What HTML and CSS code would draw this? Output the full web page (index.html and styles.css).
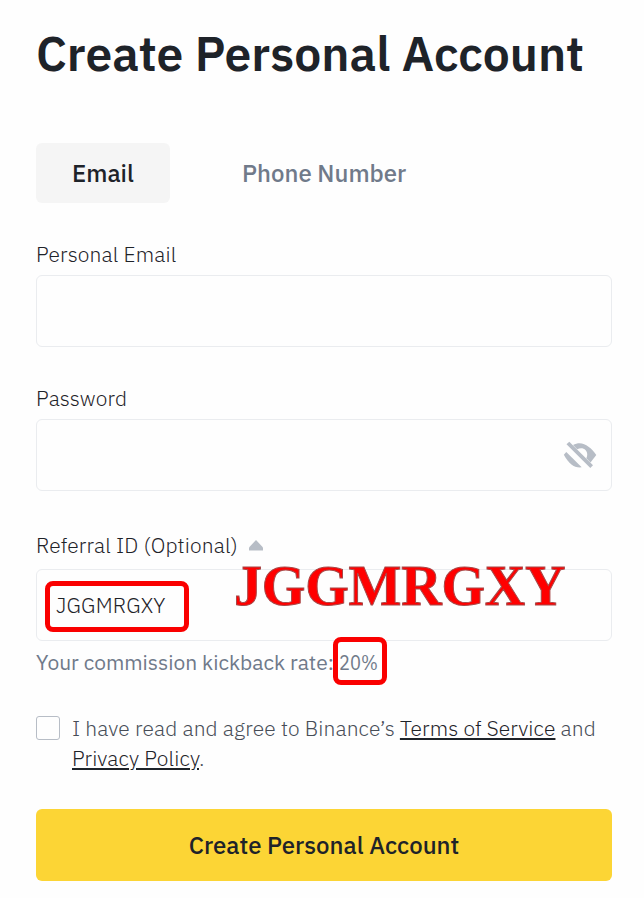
FILE: index.html
```html
<!DOCTYPE html>
<html lang="en">
<head>
    <meta charset="UTF-8">
    <meta name="viewport" content="width=device-width, initial-scale=1.0">
    <title>Create Personal Account</title>
    <link rel="stylesheet" href="styles.css">
</head>
<body>
    <div class="container">
        <h1>Create Personal Account</h1>

        <div class="tabs">
            <div class="tab active">Email</div>
            <div class="tab">Phone Number</div>
        </div>

        <div class="field">
            <div class="label label-email">Personal Email</div>
            <div class="input"></div>
        </div>

        <div class="field">
            <div class="label label-password">Password</div>
            <div class="input input-password">
                <svg class="eye" viewBox="0 0 34 28" width="34" height="28">
                    <path d="M6.3 .7L30 24.3L27.3 27L3.5 3.3z"/>
                    <path d="M10 4C19 -1 27 5 33.3 14L27.5 21.5L23.3 17.3C26.5 10.5 21 5 14.2 8.2z"/>
                    <path d="M3.3 11L18.7 26.3C11 27 6 23 .8 13.7z"/>
                </svg>
            </div>
        </div>

        <div class="field referral">
            <div class="label label-referral">
                <span>Referral ID (Optional)</span>
                <svg class="arrow" viewBox="0 0 14 11" width="14" height="11">
                    <path d="M7 0L14 7.5V10.5H0V7.5z"/>
                </svg>
            </div>
            <div class="input input-referral">
                <span class="code">JGGMRGXY</span>
                <span class="mark mark-code"></span>
                <span class="big-code">JGGMRGXY</span>
            </div>
            <div class="rate">Your commission kickback rate: <span class="percent"><span class="percent-value">20%</span><span class="mark mark-rate"></span></span></div>
        </div>

        <div class="agree">
            <span class="checkbox"></span>
            <div class="agree-text">I have read and agree to Binance’s <a class="terms">Terms of Service</a> and<br><a class="privacy">Privacy Policy</a>.</div>
        </div>

        <div class="button">Create Personal Account</div>
    </div>
</body>
</html>
```
FILE: styles.css
```css
* {
    box-sizing: border-box;
}
body {
    margin: 0;
    background-color: #fefefe;
    color: #1e2329;
    font-family: "IBM Plex Sans", Roboto, Arial, sans-serif;
    font-size: 21px;
    font-weight: 300;
}
.container {
    width: 612px;
    padding: 22px 0 0 36px;
}
h1 {
    margin: 0;
    font-size: 48px;
    font-weight: 600;
    line-height: 62px;
    white-space: nowrap;
}
.tabs {
    display: flex;
    gap: 36px;
    margin-top: 59px;
}
.tab {
    height: 60px;
    padding: 0 36px;
    border-radius: 6px;
    font-size: 24px;
    font-weight: 500;
    line-height: 61px;
    color: #707a8a;
}
.tab.active {
    width: 134px;
    background-color: #f5f5f5;
    color: #1e2329;
}
.field {
    margin-top: 42px;
}
.label {
    height: 30px;
    line-height: 18px;
    letter-spacing: 0.14px;
}
.input {
    position: relative;
    height: 72px;
    border: 1px solid #eaecef;
    border-radius: 6px;
}
.input-password {
    display: flex;
    align-items: center;
    justify-content: flex-end;
    padding-right: 14px;
}
.eye, .arrow {
    fill: #b7bdc6;
}
.referral {
    margin-top: 45px;
}
.label-referral {
    display: flex;
    gap: 11px;
    height: 33px;
}
.arrow {
    margin-top: 4px;
}
.input-referral {
    padding-left: 19px;
    line-height: 70px;
}
.code {
    letter-spacing: 0.2px;
}
.mark {
    position: absolute;
    border: 5px solid #fa0000;
    border-radius: 8px;
}
.mark-code {
    left: 8px;
    top: 11px;
    width: 144px;
    height: 51px;
}
.big-code {
    position: absolute;
    left: 197px;
    top: -14px;
    font-family: "Liberation Serif", "Times New Roman", serif;
    font-size: 56px;
    font-weight: bold;
    line-height: 60px;
    letter-spacing: -0.2px;
    color: #ff0000;
    -webkit-text-stroke: 1px #a84848;
}
.rate {
    height: 24px;
    margin-top: 10px;
    font-weight: 400;
    line-height: 22px;
    white-space: nowrap;
    color: #707a8a;
}
.percent {
    position: relative;
}
.percent-value {
    display: inline-block;
    transform: scaleX(0.87);
    transform-origin: left;
}
.mark-rate {
    left: -6px;
    top: -11px;
    width: 54px;
    height: 48px;
}
.agree {
    display: flex;
    gap: 12px;
    margin-top: 38px;
}
.checkbox {
    width: 24px;
    height: 24px;
    margin-top: 3px;
    border: 1px solid #b7bdc6;
    border-radius: 3px;
}
.agree-text {
    line-height: 30px;
    letter-spacing: 0.12px;
    white-space: nowrap;
    color: #474d57;
}
.agree-text a {
    color: #1e2329;
    text-decoration: underline;
    text-decoration-thickness: 2px;
    text-underline-offset: 2px;
}
.button {
    height: 72px;
    margin-top: 36px;
    border-radius: 6px;
    background-color: #fcd535;
    font-size: 24px;
    font-weight: 500;
    line-height: 73px;
    text-align: center;
}
```
